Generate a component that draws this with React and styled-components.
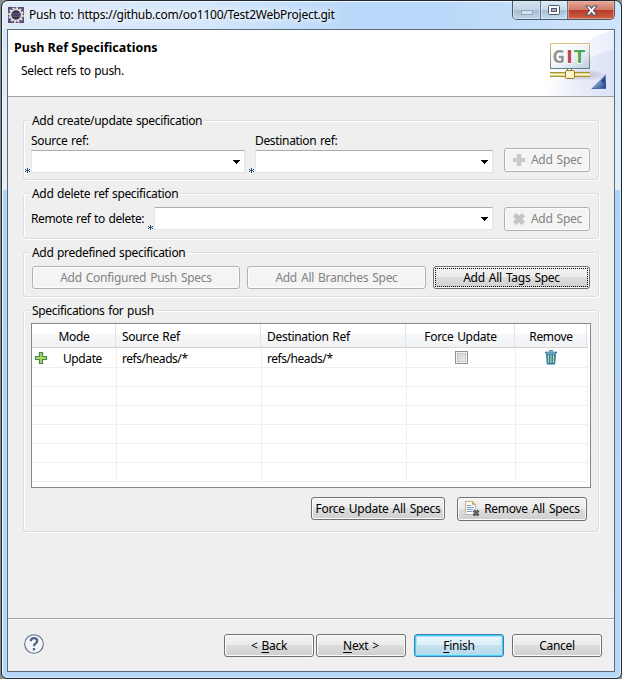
import React from 'react'
import styled, { createGlobalStyle, css } from "styled-components";

const GlobalStyle = createGlobalStyle`
    * { box-sizing: border-box; }
    body {
        margin: 0;
        overflow: hidden;
        background: #8d8d8d;
        font-family: "Noto Sans", "Open Sans", sans-serif;
        font-size: 12px;
        line-height: 16px;
        color: #000;
    }
`;

const rows = [0, 1, 2, 3, 4, 5, 6]

const EclipseIcon = () => (
    <svg width="16" height="16" viewBox="0 0 16 16">
        <rect width="16" height="16" fill="#5d4c78" />
        <circle cx="8" cy="8" r="6.9" fill="none" stroke="#ece8e0" strokeWidth="1.8" strokeDasharray="2 1.6" />
        <circle cx="8" cy="8" r="5.6" fill="#39324f" stroke="#dedad4" strokeWidth="1.7" />
        <path d="M3.7 6.5h8.6M3.4 8h9.2M3.7 9.5h8.6" stroke="#65618a" strokeWidth=".7" />
    </svg>
)

const GitBanner = () => (
    <svg width="72" height="66" viewBox="542 30 72 66">
        <defs>
            <linearGradient id="panel" x1="0" y1="0" x2="1" y2="1">
                <stop offset="0" stopColor="#fff" />
                <stop offset=".5" stopColor="#f1f5f9" />
                <stop offset="1" stopColor="#b9cce0" />
            </linearGradient>
            <linearGradient id="panelEdge" x1="0" y1="0" x2="0" y2="1">
                <stop offset="0" stopColor="#dfc182" />
                <stop offset="1" stopColor="#5f8290" />
            </linearGradient>
            <linearGradient id="sweep" x1="0" y1="0" x2="1" y2="0">
                <stop offset="0" stopColor="#fff" />
                <stop offset=".35" stopColor="#fbfcfe" />
                <stop offset="1" stopColor="#e9edf9" />
            </linearGradient>
            <linearGradient id="sweepLow" x1="0" y1="0" x2="1" y2="0">
                <stop offset="0" stopColor="#e0e6f7" stopOpacity="0" />
                <stop offset="1" stopColor="#dde3f6" />
            </linearGradient>
            <linearGradient id="corner" x1="0" y1="0" x2="1" y2="1">
                <stop offset=".3" stopColor="#9fc0e2" />
                <stop offset="1" stopColor="#1c3a82" />
            </linearGradient>
            <radialGradient id="shade">
                <stop offset="0" stopColor="#b9b5c9" />
                <stop offset="1" stopColor="#b9b5c9" stopOpacity="0" />
            </radialGradient>
        </defs>
        <path d="M542 96C548 68 580 38 614 30V96Z" fill="url(#sweep)" />
        <path d="M542 96C562 70 590 55 614 50V96Z" fill="url(#sweepLow)" />
        <ellipse cx="583" cy="75" rx="25" ry="6" fill="url(#shade)" />
        <rect x="550.5" y="43.5" width="39" height="25" fill="url(#panel)" stroke="url(#panelEdge)" />
        <path d="M550 68.5h40" stroke="#5b7d8d" />
        <g fontFamily="Open Sans, sans-serif" fontSize="18" fontWeight="700" stroke="#fff" strokeWidth="1.5" paintOrder="stroke">
            <text x="552.5" y="63" fill="#929292" textLength="12.5" lengthAdjust="spacingAndGlyphs">G</text>
            <text x="566" y="63" fill="#bd4650" textLength="7" lengthAdjust="spacingAndGlyphs">I</text>
            <text x="573.5" y="63" fill="#55a457" textLength="12" lengthAdjust="spacingAndGlyphs">T</text>
        </g>
        <path d="M550 72.5h40M550 76.5h40" stroke="#a89731" />
        <path d="M550 73.5h40M550 75.5h40" stroke="#dfd38a" />
        <path d="M550 74.5h40" stroke="#fff9d4" />
        <path d="M567.5 69v2M571.5 69v2" stroke="#80752c" />
        <rect x="565.5" y="70.5" width="9" height="8" rx="1" fill="#ffeebd" stroke="#957c2d" />
        <rect x="567" y="72" width="4" height="4" fill="#fff9e5" />
        <path d="M606 74V89H591Z" fill="url(#corner)" />
        <path d="M605 76v9l-4-4Z" fill="#234b91" />
        <path d="M592 88.5h14" stroke="#4169a8" />
    </svg>
)

const PlusIcon = ({ fill, stroke }) => (
    <svg width="14" height="14" viewBox="0 0 14 14">
        <path d="M5.5 1.5h3v4h4v3h-4v4h-3v-4h-4v-3h4z" fill={fill} stroke={stroke} strokeWidth="1.2" />
    </svg>
)

const CrossIcon = () => (
    <svg width="14" height="14" viewBox="0 0 14 14">
        <path d="M2.7 2.7l8.6 8.6M11.3 2.7l-8.6 8.6" stroke="#c4c4c4" strokeWidth="4.6" />
    </svg>
)

const TrashIcon = () => (
    <svg width="12" height="15" viewBox="0 0 12 15">
        <path d="M1 3.5h10l-.7 10q-.1 1-1.3 1H3q-1.2 0-1.3-1z" fill="#297ba3" />
        <path d="M3.5 4.5v8.5M6 4.5v8.5M8.5 4.5v8.5" stroke="#b3d8a0" strokeWidth="1.2" />
        <path d="M0 2.5h12" stroke="#2b719b" strokeWidth="1.6" />
        <path d="M4 .8h4" stroke="#2b719b" strokeWidth="1.2" />
        <path d="M2 2.3h8" stroke="#9bc9c6" strokeWidth=".7" />
    </svg>
)

const RemoveAllIcon = () => (
    <svg width="16" height="16" viewBox="0 0 16 16">
        <path d="M1.5.5h7l3 3v10h-10z" fill="#f8fbff" stroke="#a9b7c9" />
        <path d="M1.5 13V.5h7" fill="none" stroke="#c9b67a" />
        <path d="M8.5.5v3h3z" fill="#e2c977" stroke="#cbad5c" />
        <path d="M3 4.5h4M3 6.5h7M3 8.5h6M3 10.5h5" stroke="#7899c9" />
        <path d="M9.5 9.5l5 5M14.5 9.5l-5 5" stroke="#555" strokeWidth="2.7" />
        <path d="M10 12h4" stroke="#777" />
    </svg>
)

const HelpIcon = () => (
    <svg width="20" height="20" viewBox="0 0 20 20">
        <circle cx="10" cy="10" r="9.3" fill="#f4f5f8" stroke="#5c6d8d" strokeWidth="1.1" />
        <path d="M6.8 7.3Q6.8 4.2 10 4.2T13.2 7Q13.2 8.5 11.5 9.6Q10 10.5 10 12.2" fill="none" stroke="#52648a" strokeWidth="2.3" />
        <rect x="8.7" y="14" width="2.6" height="2.4" rx=".8" fill="#52648a" />
    </svg>
)

const ComboBox = ({ width }) => (
    <Combo $width={width}>
        <svg width="7" height="4" viewBox="0 0 7 4" shapeRendering="crispEdges"><path d="M0 0h7v1h-1v1h-1v1h-1v1h-1v-1h-1v-1h-1v-1h-1z" /></svg>
    </Combo>
)

const App = () => {
    return (
    <>
        <GlobalStyle />
        <Window>
            <TitleBar>
                <EclipseIcon />
                <Title>Push to: https://github.com/oo1100/Test2WebProject.git</Title>
                <WindowButtons>
                    <WindowButton>
                        <svg width="12" height="5" viewBox="0 0 12 5"><rect x=".5" y=".5" width="11" height="4" fill="#d6e2ee" stroke="#92a4b7" /></svg>
                    </WindowButton>
                    <WindowButton $bright>
                        <svg width="12" height="10" viewBox="0 0 12 10"><rect x=".5" y=".5" width="11" height="9" rx="1" fill="#fff" stroke="#4d5566" /><rect x="3.5" y="3.5" width="5" height="3" fill="#98b6d4" stroke="#4d5566" /></svg>
                    </WindowButton>
                    <WindowButton $close>
                        <svg width="13" height="11" viewBox="0 0 13 11"><path d="M1 1h3.5l2 2.3L8.5 1H12L8.5 5.5 12 10H8.5L6.5 7.7 4.5 10H1L4.5 5.5z" fill="#fff" stroke="#555768" strokeWidth="1.1" /></svg>
                    </WindowButton>
                </WindowButtons>
            </TitleBar>
            <Client>
                <Header>
                    <div>
                        <h1>Push Ref Specifications</h1>
                        <p>Select refs to push.</p>
                    </div>
                    <GitBanner />
                </Header>
                <Body>
                    <Group $height={60}>
                        <Legend>Add create/update specification</Legend>
                        <CreateGrid>
                            <Field>
                                <Text>Source ref:</Text>
                                <ComboBox width={214} />
                                <Star />
                            </Field>
                            <Field>
                                <Text>Destination ref:</Text>
                                <ComboBox width={238} />
                                <Star />
                            </Field>
                            <Button $width={86} $height={24} $disabled $gap={5}>
                                <PlusIcon fill="#cdcdcd" stroke="#c3c3c3" /><span>Add Spec</span>
                            </Button>
                        </CreateGrid>
                    </Group>
                    <Group $height={46}>
                        <Legend>Add delete ref specification</Legend>
                        <DeleteRow>
                            <Text>Remote ref to delete:</Text>
                            <Field>
                                <ComboBox width={339} />
                                <Star />
                            </Field>
                            <Button $width={86} $height={24} $disabled $gap={5}>
                                <CrossIcon /><span>Add Spec</span>
                            </Button>
                        </DeleteRow>
                    </Group>
                    <Group $height={45}>
                        <Legend>Add predefined specification</Legend>
                        <PredefinedRow>
                            <Button $width={208} $disabled>Add Configured Push Specs</Button>
                            <Button $width={179} $disabled>Add All Branches Spec</Button>
                            <Button $width={157} $focused>Add All Tags Spec</Button>
                        </PredefinedRow>
                    </Group>
                    <Group $height={222}>
                        <Legend>Specifications for push</Legend>
                        <Table>
                            <TableHeader>
                                <HeadCell $center>Mode</HeadCell>
                                <HeadCell>Source Ref</HeadCell>
                                <HeadCell>Destination Ref</HeadCell>
                                <HeadCell $center>Force Update</HeadCell>
                                <HeadCell $center>Remove</HeadCell>
                            </TableHeader>
                            {rows.map((row) => (
                                <Row key={row}>
                                    <Cell $mode>{row === 0 && <><PlusIcon fill="#b8d65d" stroke="#3c8a51" /><span>Update</span></>}</Cell>
                                    <Cell>{row === 0 && 'refs/heads/*'}</Cell>
                                    <Cell>{row === 0 && 'refs/heads/*'}</Cell>
                                    <Cell $center>{row === 0 && <CheckBox />}</Cell>
                                    <Cell $center>{row === 0 && <TrashIcon />}</Cell>
                                </Row>
                            ))}
                        </Table>
                        <TableActions>
                            <Button $width={134}>Force Update All Specs</Button>
                            <Button $width={130} $height={24} $gap={4}><RemoveAllIcon /><span>Remove All Specs</span></Button>
                        </TableActions>
                    </Group>
                </Body>
                <Footer>
                    <HelpIcon />
                    <FooterButtons>
                        <Button $width={90}><span>&lt; <u>B</u>ack</span></Button>
                        <Button $width={90}><span><u>N</u>ext &gt;</span></Button>
                        <Button $width={90} $primary><span><u>F</u>inish</span></Button>
                        <Button $width={90}>Cancel</Button>
                    </FooterButtons>
                </Footer>
            </Client>
        </Window>
    </>
  )
}

const Window = styled.div`
        width: 621px;
        height: 679px;
        margin-left: 1px;
        border: 1px solid #20262e;
        border-radius: 7px 7px 6px 6px;
        box-shadow: inset 1px 1px 0 #eff8ff, inset -1px -1px 0 #d9edff;
        padding: 0 6px 6px 5px;
        display: flex;
        flex-direction: column;
        background: linear-gradient(90deg, #deebf9 0, #d5e7fa 200px, #b9d8f9 350px, #b9d8f9 440px, #cfe4fa 600px) 0 0 / 100% 28px no-repeat,
            linear-gradient(180deg, #cfe4fa 0, #dcebfa 90px, #e4effa 188px, #aed3fa 190px, #b8d8f8 100%);
`;

const TitleBar = styled.div`
        height: 28px;
        flex: none;
        display: flex;
        padding-left: 1px;
        > svg {
            margin-top: 6px;
        }
`;

const Title = styled.span`
        margin: 6px 0 0 5px;
        flex: 1;
        white-space: nowrap;
        letter-spacing: -0.25px;
        word-spacing: 0.8px;
        text-shadow: 0 0 6px #fff, 0 0 8px #fff;
`;

const WindowButtons = styled.div`
        height: 19px;
        display: flex;
        border: 1px solid #4c5967;
        border-top: 0;
        border-radius: 0 0 5px 5px;
        overflow: hidden;
`;

const WindowButton = styled.div`
        width: 28px;
        display: flex;
        align-items: center;
        justify-content: center;
        background: linear-gradient(#d4e2ef 0, #c1d3e5 50%, #a7bdd3 51%, #c0d6e9 100%);
        box-shadow: inset 0 0 0 1px #dcecf899;
        border-right: 1px solid #5f7183;
        &:first-child svg {
            margin-top: 4px;
        }
        ${({ $bright }) => $bright && css`
            width: 27px;
            background: linear-gradient(#dfebf7 0, #c5d9ec 50%, #a3bfd8 51%, #c2ddf2 100%);
        `}
        ${({ $close }) => $close && css`
            width: 46px;
            border: 0;
            background: linear-gradient(#e5a99a 0, #d27b69 48%, #b53a27 50%, #cd6345 100%);
            box-shadow: inset 0 0 0 1px #efb9aa99;
        `}
`;

const Client = styled.div`
        flex: 1;
        display: flex;
        flex-direction: column;
        border: 1px solid #5c6a78;
        background: #efefef;
`;

const Header = styled.div`
        height: 67px;
        display: flex;
        justify-content: space-between;
        background: #fff;
        border-bottom: 1px solid #a0a0a0;
        h1 {
            margin: 10px 0 0 6px;
            font-size: 12.5px;
            line-height: 16px;
            letter-spacing: 0;
        }
        p {
            margin: 7px 0 0 13px;
            letter-spacing: -0.3px;
            word-spacing: 0.7px;
        }
`;

const Body = styled.div`
        flex: 1;
        padding: 23px 15px 0;
        letter-spacing: -0.33px;
        word-spacing: 0.8px;
`;

const Group = styled.div`
        width: 576px;
        height: ${({ $height }) => $height}px;
        margin-bottom: 13px;
        border: 1px solid #d5dfe8;
        border-radius: 3px;
        box-shadow: 1px 1px 0 #fff, inset 1px 1px 0 #fff;
`;

const Legend = styled.div`
        width: fit-content;
        height: 16px;
        margin: -8px 0 0 6px;
        padding: 0 2px;
        background: #efefef;
        white-space: nowrap;
`;

const Text = styled.div`
        white-space: nowrap;
`;

const CreateGrid = styled.div`
        display: grid;
        grid-template-columns: 224px 249px 86px;
        align-items: start;
        padding: 4px 0 0 7px;
        > button {
            margin-top: 15px;
        }
`;

const Field = styled.div`
        position: relative;
        > ${Text} {
            height: 17px;
        }
`;

// required-field marker, sits beside the bottom left corner of a combo
const Star = styled.span`
        position: absolute;
        left: -6px;
        bottom: 0;
        width: 5px;
        height: 5px;
        background:
            linear-gradient(#234a75, #234a75) 2px 0 / 1px 5px no-repeat,
            linear-gradient(#234a75, #234a75) 0 1px / 1px 1px no-repeat,
            linear-gradient(#234a75, #234a75) 4px 1px / 1px 1px no-repeat,
            linear-gradient(#234a75, #234a75) 1px 2px / 3px 1px no-repeat,
            linear-gradient(#234a75, #234a75) 0 3px / 1px 1px no-repeat,
            linear-gradient(#234a75, #234a75) 4px 3px / 1px 1px no-repeat;
`;

const Combo = styled.div`
        width: ${({ $width }) => $width}px;
        height: 23px;
        display: flex;
        align-items: center;
        justify-content: flex-end;
        padding-right: 4px;
        background: #fff;
        border: 1px solid #e2e5ec;
        border-top-color: #abadb3;
        border-radius: 1px;
`;

const DeleteRow = styled.div`
        display: grid;
        grid-template-columns: 123px 350px 86px;
        align-items: start;
        padding: 5px 0 0 7px;
        > ${Text} {
            margin-top: 4px;
            letter-spacing: -0.38px;
        }
`;

const PredefinedRow = styled.div`
        display: flex;
        justify-content: space-between;
        padding: 5px 8px 0;
`;

const Button = styled.button`
        width: ${({ $width }) => $width}px;
        height: ${({ $height }) => $height || 23}px;
        display: flex;
        align-items: center;
        justify-content: center;
        gap: ${({ $gap }) => $gap || 0}px;
        padding: 0;
        font: inherit;
        letter-spacing: -0.28px;
        word-spacing: 1.2px;
        white-space: nowrap;
        color: #000;
        border: 1px solid #707070;
        border-radius: 3px;
        background: linear-gradient(#f2f2f2 0, #ebebeb 49%, #dddddd 50%, #cfcfcf 100%);
        box-shadow: inset 0 0 0 1px #fcfcfc;
        u {
            text-underline-offset: 2px;
            text-decoration-skip-ink: none;
        }
        ${({ $disabled }) => $disabled && css`
            color: #838383;
            border-color: #adb2b5;
            background: #f4f4f4;
        `}
        ${({ $focused }) => $focused && css`
            outline: 1px dotted #000;
            outline-offset: -3px;
        `}
        ${({ $primary }) => $primary && css`
            border-color: #3c7fb1;
            background: linear-gradient(#eaf6fd 0, #dceef8 49%, #c4e1f0 50%, #b4d9ec 100%);
            box-shadow: inset 0 0 0 1px #48cdf5, inset 0 0 0 2px #a5e4f8;
        `}
`;

const Table = styled.div`
        width: 560px;
        height: 165px;
        margin: 4px 0 0 7px;
        padding-right: 2px;
        overflow: hidden;
        border: 1px solid #828790;
        background: #fff;
`;

const TableHeader = styled.div`
        height: 24px;
        display: grid;
        grid-template-columns: 84px 145px 145px 109px 72px;
        background: linear-gradient(#fff 0, #fff 42%, #f7f8fa 43%, #f1f2f4 100%);
        border-bottom: 1px solid #d5d5d5;
`;

const HeadCell = styled.div`
        padding: 5px 0 0 6px;
        letter-spacing: -0.3px;
        border-right: 1px solid #e1e4e8;
        ${({ $center }) => $center && css`
            padding-left: 1px;
            text-align: center;
        `}
`;

const Row = styled.div`
        height: 19px;
        display: grid;
        grid-template-columns: 85px 145px 145px 109px 72px;
        border-bottom: 1px solid #efefef;
        &:nth-child(2) {
            height: 20px;
        }
`;

const Cell = styled.div`
        padding: 3px 0 0 5px;
        letter-spacing: -0.45px;
        border-right: 1px solid #efefef;
        ${({ $center }) => $center && css`
            display: flex;
            justify-content: center;
            padding: 3px 0 0;
            svg {
                margin: -1px 1px 0 0;
            }
        `}
        ${({ $mode }) => $mode && css`
            display: flex;
            gap: 15px;
            padding-left: 2px;
            letter-spacing: -0.4px;
        `}
`;

const CheckBox = styled.span`
        width: 13px;
        height: 13px;
        border: 1px solid #8e8f8f;
        background: linear-gradient(135deg, #c7c9cd, #f4f4f4);
        box-shadow: inset 0 0 0 1px #f4f4f4, inset 0 0 0 2px #c5c9cc;
`;

const TableActions = styled.div`
        display: flex;
        justify-content: flex-end;
        gap: 12px;
        padding: 9px 11px 0 0;
`;

const Footer = styled.div`
        height: 53px;
        display: flex;
        justify-content: space-between;
        padding: 15px 12px 0 16px;
        border-top: 1px solid #a0a0a0;
        box-shadow: inset 0 1px 0 #fff;
`;

const FooterButtons = styled.div`
        display: grid;
        grid-template-columns: 92px 98px 98px 90px;
`;

export default App
